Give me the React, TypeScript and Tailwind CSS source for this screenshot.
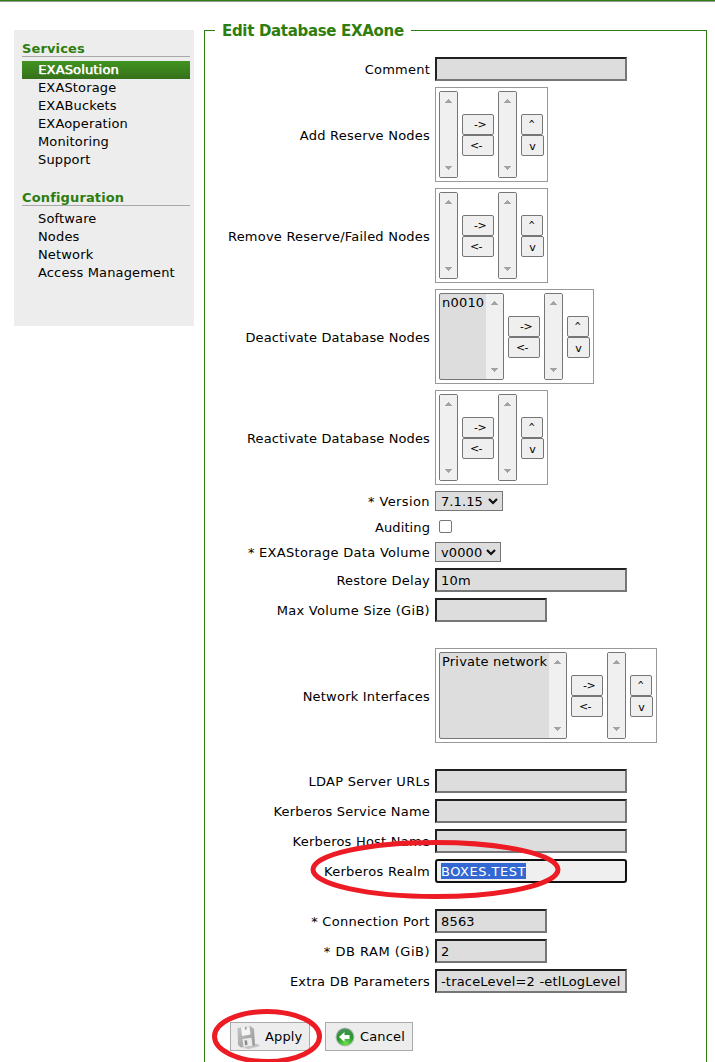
import type { ReactNode } from 'react';

function SidebarSection({ title, items, active }: { title: string; items: string[]; active?: string }) {
  return (
    <section className="mb-[19px]">
      <h2 className="h-[18px] border-b border-[#a8a8a8] text-[13px] leading-[19px] font-bold tracking-[0.14px] text-[#2e7d0e]">
        {title}
      </h2>
      <ul className="mt-[4px] tracking-[0.15px]">
        {items.map((item) => (
          <li
            key={item}
            className={
              item === active
                ? 'h-[18px] bg-linear-to-b from-[#419420] to-[#357019] pl-[16px] text-[13px] leading-[18px] text-white [text-shadow:0.5px_0_0_#fff,1px_1px_0_#6a9f55]'
                : 'h-[18px] pl-[16px] text-[13px] leading-[18px]'
            }
          >
            {item}
          </li>
        ))}
      </ul>
    </section>
  );
}

function Row({ label, className = '', tracking = 'tracking-[0.22px]', children }: { label: string; className?: string; tracking?: string; children: ReactNode }) {
  return (
    <div className={`flex items-center ${className}`}>
      <div className={`w-[225px] shrink-0 pt-[2px] pr-[5px] text-right whitespace-nowrap ${tracking}`}>{label}</div>
      {children}
    </div>
  );
}

function Field({ value = '', short = false }: { value?: string; short?: boolean }) {
  return (
    <input
      readOnly
      value={value}
      className={`h-[24px] border-2 border-t-[#212121] border-r-[#767676] border-b-[#767676] border-l-[#212121] bg-[#ddd] px-[4px] text-[13px] tracking-[0.18px] outline-none ${short ? 'w-[112px]' : 'w-[192px]'}`}
    />
  );
}

function ListBox({ item, className = 'w-[19px]' }: { item?: string; className?: string }) {
  return (
    <div className={`flex h-[87px] overflow-hidden rounded-[2px] border border-[#767676] bg-[#ddd] ${className}`}>
      <div className="min-w-0 flex-1">
        {item && <span className="block pl-[2px] leading-[17px] tracking-[0.2px] whitespace-nowrap">{item}</span>}
      </div>
      <div className="flex w-[17px] shrink-0 flex-col items-center justify-between bg-[#f0f0f0] py-[7px]">
        <svg width="7" height="4" viewBox="0 0 7 4" shapeRendering="crispEdges">
          <path d="M3 0h1v1h1v1h1v1h1v1H0V3h1V2h1V1h1z" fill="#a3a3a3" />
        </svg>
        <svg width="7" height="4" viewBox="0 0 7 4" shapeRendering="crispEdges">
          <path d="M0 0h7v1H6v1H5v1H4v1H3V3H2V2H1V1H0z" fill="#a3a3a3" />
        </svg>
      </div>
    </div>
  );
}

const smallButton = 'flex h-[21px] items-center justify-center rounded-[2px] border border-[#767676] bg-[#efefef] text-[11px] leading-none';

function Picker({ item, listClass }: { item?: string; listClass?: string }) {
  return (
    <div className="flex h-[95px] items-center gap-[4px] border border-[#999] px-[3px]">
      <ListBox item={item} className={listClass} />
      <div className="flex flex-col pt-px">
        <button type="button" className={`${smallButton} w-[32px] pl-[4px] tracking-[-0.5px]`}>-&gt;</button>
        <button type="button" className={`${smallButton} w-[32px] pr-[4px] tracking-[-0.5px]`}>&lt;-</button>
      </div>
      <ListBox />
      <div className="flex flex-col pt-px">
        <button type="button" className={`${smallButton} w-[22px]`}>
          <span className="inline-block scale-x-75">^</span>
        </button>
        <button type="button" className={`${smallButton} w-[23px] pt-px`}>v</button>
      </div>
    </div>
  );
}

function Select({ value, className }: { value: string; className: string }) {
  return (
    <button type="button" className={`flex h-[20px] items-center justify-between border border-[#767676] bg-[#ddd] pt-px pr-[4px] pl-[5px] tracking-[0.1px] ${className}`}>
      {value}
      <svg width="10" height="7" viewBox="0 0 10 7">
        <path d="M1 1 5 5 9 1" fill="none" stroke="#101010" strokeWidth="2.2" />
      </svg>
    </button>
  );
}

function DiskIcon() {
  return (
    <svg width="25" height="26" viewBox="0 0 25 26">
      <defs>
        <linearGradient id="disk" x1="0" y1="0" x2="1" y2="1">
          <stop offset="0" stopColor="#c4c4c4" />
          <stop offset="1" stopColor="#969696" />
        </linearGradient>
      </defs>
      <path d="M17 20 22 20 24 22 13 25 7 24z" fill="#c4c4c4" />
      <path d="M1.500 4 14.500 2 18 5 19 21.500 5 23.500 2 21z" fill="url(#disk)" />
      <path d="M5 3.500 13.500 2.200 14.500 10.500 6 12z" fill="#f4f4f4" />
      <path d="M6.500 15 15.500 13.800 16.500 21.800 7.500 23z" fill="#ececec" />
      <path d="M8.500 16.500 11 16.200 11.500 21 9 21.300z" fill="#8b8b8b" />
      <path d="M8.700 3 10.500 2.800 10.800 5.500 9 5.800z" fill="#a0a0a0" />
    </svg>
  );
}

function BackIcon() {
  return (
    <svg width="20" height="20" viewBox="0 0 20 20">
      <defs>
        <radialGradient id="back" cx=".55" cy=".9" r=".85">
          <stop offset="0" stopColor="#6ae04c" />
          <stop offset=".6" stopColor="#27982b" />
          <stop offset="1" stopColor="#4c8f5c" />
        </radialGradient>
      </defs>
      <circle cx="10" cy="10" r="9.500" fill="#b5c4b8" />
      <circle cx="10" cy="10" r="8.500" fill="url(#back)" />
      <path d="M4 10 9.500 5v3H14.500v4H9.500v3z" fill="#fff" />
    </svg>
  );
}

export default function App() {
  return (
    <div className="relative flex h-[1062px] w-[715px] flex-col overflow-hidden bg-white font-['Verdana','DejaVu_Sans',sans-serif] text-[13px] leading-[18px] text-black">
      <div className="h-[2px] shrink-0 border-b border-[#999] bg-[#2e7d0e]" />
      <div className="flex flex-1 items-start pt-[28px] pl-[14px]">
        <aside className="h-[296px] w-[180px] shrink-0 bg-[#ededed] pt-[9px] pr-[4px] pl-[8px]">
          <SidebarSection
            title="Services"
            active="EXASolution"
            items={['EXASolution', 'EXAStorage', 'EXABuckets', 'EXAoperation', 'Monitoring', 'Support']}
          />
          <SidebarSection title="Configuration" items={['Software', 'Nodes', 'Network', 'Access Management']} />
        </aside>

        <main className="ml-[10px] h-[1060px] w-[503px] shrink-0 border border-[#2e7d0e] pl-[5px]">
          <h1 className="-mt-[11px] ml-[5px] h-[20px] w-[196px] bg-white pl-[7px] text-[15px] leading-[22px] font-bold tracking-[-0.32px] whitespace-nowrap text-[#2e7d0e]">
            Edit Database EXAone
          </h1>
          <form className="mt-[17px] flex flex-col gap-[6px]">
            <Row label="Comment"><Field /></Row>
            <Row label="Add Reserve Nodes"><Picker /></Row>
            <Row label="Remove Reserve/Failed Nodes"><Picker /></Row>
            <Row label="Deactivate Database Nodes" tracking="tracking-[0.12px]"><Picker item="n0010" listClass="w-[65px]" /></Row>
            <Row label="Reactivate Database Nodes" tracking="tracking-[0.12px]"><Picker /></Row>
            <Row label="* Version" className="h-[20px]" tracking="tracking-[0.4px]"><Select value="7.1.15" className="w-[68px]" /></Row>
            <Row label="Auditing" className="h-[19px]" tracking="tracking-[0.1px]">
              <span role="checkbox" aria-checked="false" className="ml-[4px] size-[13px] rounded-[2px] border border-[#767676] bg-white" />
            </Row>
            <Row label="* EXAStorage Data Volume" className="h-[20px]" tracking="tracking-[0.29px]"><Select value="v0000" className="w-[66px]" /></Row>
            <Row label="Restore Delay"><Field value="10m" /></Row>
            <Row label="Max Volume Size (GiB)" tracking="tracking-[0.3px]"><Field short /></Row>
            <Row label="Network Interfaces" className="my-[20px]"><Picker item="Private network" listClass="w-[128px]" /></Row>
            <Row label="LDAP Server URLs" tracking="tracking-[0.27px]"><Field /></Row>
            <Row label="Kerberos Service Name"><Field /></Row>
            <Row label="Kerberos Host Name"><Field /></Row>
            <Row label="Kerberos Realm" className="mb-[20px]" tracking="tracking-[0.28px]">
              <div className="flex h-[24px] w-[192px] items-center rounded-[3px] border-2 border-[#101010] bg-[#efefef] px-[4px]">
                <span className="h-[16px] bg-[#3367d1] leading-[17px] tracking-[0.5px] text-white">BOXES.TEST</span>
              </div>
            </Row>
            <Row label="* Connection Port" tracking="tracking-[0.28px]"><Field short value="8563" /></Row>
            <Row label="* DB RAM (GiB)" tracking="tracking-[0.5px]"><Field short value="2" /></Row>
            <Row label="Extra DB Parameters"><Field value="-traceLevel=2 -etlLogLevel" /></Row>
            <div className="mt-[23px] flex gap-[15px] pl-[20px]">
              <button type="button" className="flex h-[29px] w-[80px] items-center gap-[4px] border border-[#aaa] bg-[#ededed] pl-[5px] tracking-[0.15px]">
                <DiskIcon />Apply
              </button>
              <button type="button" className="flex h-[29px] w-[88px] items-center gap-[5px] border border-[#aaa] bg-[#ededed] pl-[9px] tracking-[0.15px]">
                <BackIcon />Cancel
              </button>
            </div>
          </form>
        </main>
      </div>
      <svg className="pointer-events-none absolute top-0 left-0" width="715" height="1062" viewBox="0 0 715 1062" fill="none" stroke="#ed1c24" strokeWidth="5">
        <ellipse cx="435.500" cy="869.500" rx="122.500" ry="27" />
        <ellipse cx="267" cy="1036.500" rx="52.500" ry="25" />
      </svg>
    </div>
  );
}
